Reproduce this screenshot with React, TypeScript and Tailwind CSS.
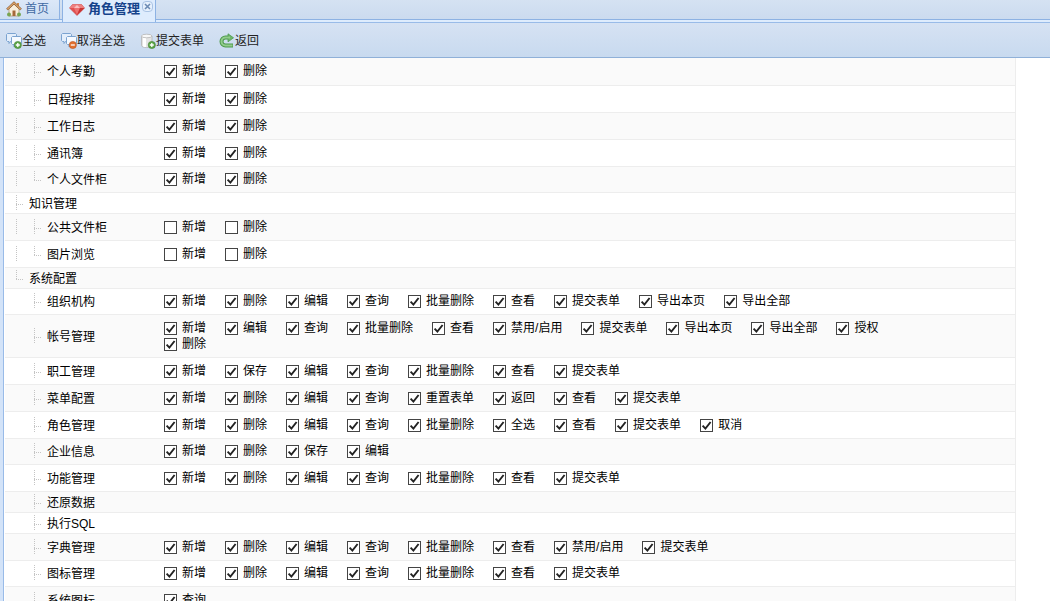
import { useState } from "react";
import clsx from "clsx";

type Guide = "none" | "bar" | "tee" | "end";

interface MenuRow {
  name: string;
  guides: Guide[];
  actions?: string[];
  unchecked?: boolean;
}

const ROWS: MenuRow[] = [
  { name: "个人考勤", guides: ["bar", "tee"], actions: ["新增", "删除"] },
  { name: "日程按排", guides: ["bar", "tee"], actions: ["新增", "删除"] },
  { name: "工作日志", guides: ["bar", "tee"], actions: ["新增", "删除"] },
  { name: "通讯簿", guides: ["bar", "tee"], actions: ["新增", "删除"] },
  { name: "个人文件柜", guides: ["bar", "end"], actions: ["新增", "删除"] },
  { name: "知识管理", guides: ["tee"] },
  { name: "公共文件柜", guides: ["bar", "tee"], actions: ["新增", "删除"], unchecked: true },
  { name: "图片浏览", guides: ["bar", "end"], actions: ["新增", "删除"], unchecked: true },
  { name: "系统配置", guides: ["end"] },
  {
    name: "组织机构",
    guides: ["none", "tee"],
    actions: ["新增", "删除", "编辑", "查询", "批量删除", "查看", "提交表单", "导出本页", "导出全部"],
  },
  {
    name: "帐号管理",
    guides: ["none", "tee"],
    actions: ["新增", "编辑", "查询", "批量删除", "查看", "禁用/启用", "提交表单", "导出本页", "导出全部", "授权", "删除"],
  },
  { name: "职工管理", guides: ["none", "tee"], actions: ["新增", "保存", "编辑", "查询", "批量删除", "查看", "提交表单"] },
  { name: "菜单配置", guides: ["none", "tee"], actions: ["新增", "删除", "编辑", "查询", "重置表单", "返回", "查看", "提交表单"] },
  {
    name: "角色管理",
    guides: ["none", "tee"],
    actions: ["新增", "删除", "编辑", "查询", "批量删除", "全选", "查看", "提交表单", "取消"],
  },
  { name: "企业信息", guides: ["none", "tee"], actions: ["新增", "删除", "保存", "编辑"] },
  { name: "功能管理", guides: ["none", "tee"], actions: ["新增", "删除", "编辑", "查询", "批量删除", "查看", "提交表单"] },
  { name: "还原数据", guides: ["none", "tee"] },
  { name: "执行SQL", guides: ["none", "tee"] },
  { name: "字典管理", guides: ["none", "tee"], actions: ["新增", "删除", "编辑", "查询", "批量删除", "查看", "禁用/启用", "提交表单"] },
  { name: "图标管理", guides: ["none", "tee"], actions: ["新增", "删除", "编辑", "查询", "批量删除", "查看", "提交表单"] },
  { name: "系统图标", guides: ["none", "tee"], actions: ["查询"] },
];

function HomeIcon() {
  return (
    <svg className="size-4 shrink-0" viewBox="0 0 16 16">
      <path d="M3 8l5-5 5 5v7H3z" fill="#f8eedb" stroke="#a98a63" strokeWidth=".7" />
      <path d="M11 2h2v4l-2-2z" fill="#c98a4e" />
      <path d="M1 8.5L8 1.8l7 6.7" fill="none" stroke="#8a5a33" strokeWidth="2.4" />
      <path d="M1.3 8.2L8 1.8l6.7 6.4" fill="none" stroke="#dba56c" strokeWidth="1.2" />
      <path d="M6.5 9.5h3V15h-3z" fill="#a5683a" />
      <circle cx="3" cy="13.5" r="2" fill="#78a552" />
      <circle cx="13" cy="13.5" r="2" fill="#78a552" />
    </svg>
  );
}

function RubyIcon() {
  return (
    <svg className="size-4 shrink-0" viewBox="0 0 16 16">
      <path d="M3.5 3.5h9L15.5 7 8 14.5.5 7z" fill="#e25050" stroke="#c54646" strokeWidth=".6" />
      <path d="M3.5 3.5h9L15.5 7H.5z" fill="#ee8080" />
      <path d="M5 7l3-3 3 3z" fill="#f9c0c0" />
      <path d="M5 7h6l-3 6.5z" fill="#ee7272" />
      <path d="M11 7h4.5L8 14z" fill="#c93434" />
    </svg>
  );
}

function CommentsIcon({ remove }: { remove?: boolean }) {
  return (
    <svg className="size-4 shrink-0" viewBox="0 0 16 16">
      <path d="M1.5.5h8l1 1v6l-1 1h-5L3 10.500V8.500H1.500l-1-1v-6z" fill="#e3eefb" stroke="#7ba3d0" />
      <path d="M6.500 3.500h8l1 1v6l-1 1H10l-2 2.500v-2.500H6.500l-1-1v-6z" fill="#f6faff" stroke="#7ba3d0" />
      <circle cx="11.8" cy="12" r="3.6" fill={remove ? "#e2702f" : "#5da548"} stroke={remove ? "#b9501c" : "#3f8230"} strokeWidth=".6" />
      <path d={remove ? "M9.800 12h4" : "M9.800 12h4M11.800 10v4"} stroke="#fff" strokeWidth="1.3" />
    </svg>
  );
}

function DatabaseAddIcon() {
  return (
    <svg className="size-4 shrink-0" viewBox="0 0 16 16">
      <path d="M1.5 3v9.5c0 1.2 2.2 2 5 2s5.500-.8 5.500-2V3z" fill="#e4e4e4" stroke="#b5b5b5" strokeWidth=".8" />
      <path d="M3 4v9.5c1 .5 2 .6 3 .6V4.5z" fill="#fff" />
      <ellipse cx="6.7" cy="3" rx="5.2" ry="1.8" fill="#f8f8f8" stroke="#b5b5b5" strokeWidth=".8" />
      <circle cx="11.8" cy="12" r="3.6" fill="#5da548" stroke="#3f8230" strokeWidth=".6" />
      <path d="M9.8 12h4M11.8 10v4" stroke="#fff" strokeWidth="1.3" />
    </svg>
  );
}

function BackIcon() {
  return (
    <svg className="size-4 shrink-0" viewBox="0 0 16 16">
      <path d="M14 12.5H6.5a4 4 0 010-8H10" fill="none" stroke="#4d9a4d" strokeWidth="4" />
      <path d="M9 .8L14.5 4.8 9 8.8z" fill="#6fb56b" stroke="#4d9a4d" strokeWidth=".8" />
      <path d="M13.5 12.5h-7a4 4 0 010-8H11" fill="none" stroke="#92cc8c" strokeWidth="2" />
    </svg>
  );
}

function TreeGuide({ kind }: { kind: Guide }) {
  const d = {
    none: "",
    bar: "M1.5 0v16",
    tee: "M1.5 0v16M1 9.5h7",
    end: "M1.5 0v10M1 9.5h7",
  }[kind];

  return (
    <svg className="h-4 w-[18px] shrink-0" viewBox="0 0 18 16">
      <path d={d} fill="none" stroke="#c4c4c4" strokeDasharray="1 1" />
    </svg>
  );
}

function ActionBox({ label, checked, onToggle }: { label: string; checked: boolean; onToggle: () => void }) {
  return (
    <label className="mr-[19px] flex h-4 items-start gap-[5px] leading-4 whitespace-nowrap">
      <span className="relative mt-0.5 size-[13px] shrink-0">
        <input
          type="checkbox"
          checked={checked}
          onChange={onToggle}
          className="block size-[13px] appearance-none border border-[#444] bg-white"
        />
        {checked && (
          <svg className="pointer-events-none absolute inset-0 size-[13px]" viewBox="0 0 13 13">
            <path d="M2.6 6.6l2.8 3L10.600 3" fill="none" stroke="#222" strokeWidth="1.9" />
          </svg>
        )}
      </span>
      {label}
    </label>
  );
}

const initialChecked = () =>
  ROWS.map(row => (row.actions ?? []).map(() => !row.unchecked));

export default function App() {
  const [checked, setChecked] = useState<boolean[][]>(initialChecked);

  const setAll = (value: boolean) => setChecked(prev => prev.map(row => row.map(() => value)));
  const toggle = (r: number, c: number) =>
    setChecked(prev => prev.map((row, i) => (i === r ? row.map((v, j) => (j === c ? !v : v)) : row)));

  const tools = [
    { label: "全选", icon: <CommentsIcon />, onClick: () => setAll(true) },
    { label: "取消全选", icon: <CommentsIcon remove />, onClick: () => setAll(false) },
    { label: "提交表单", icon: <DatabaseAddIcon /> },
    { label: "返回", icon: <BackIcon /> },
  ];

  return (
    <div className="flex h-screen flex-col overflow-hidden bg-white font-['Liberation_Sans','Noto_Sans_CJK_SC',sans-serif] text-xs text-black">
      {/* Tabs */}
      <nav className="flex h-[23px] shrink-0 items-start border-b border-[#99bbe8] bg-[#deecfd]">
        <div className="flex h-5 w-full gap-0.5 border-b border-[#8db2e3] bg-linear-to-b from-[#d5e2f2] to-[#cbdbef]">
          <a href="#home" className="flex h-5 items-start gap-[3px] border-r border-b border-[#8db2e3] bg-linear-to-b from-[#dce8f8] to-[#cddef3] pt-px pr-2.5 pl-1.5 leading-4 text-[#416aa3]">
            <HomeIcon />
            首页
          </a>
          <div className="flex h-[22px] items-start border-x border-[#8db2e3] bg-[#deecfd] pt-px pr-0.5 pl-1.5">
            <a href="#roles" className="flex gap-[3px] text-[13px] leading-4 font-bold text-[#15428b]">
              <RubyIcon />
              角色管理
            </a>
            <button aria-label="关闭" className="ml-0.5 flex size-[11px] items-center justify-center rounded-sm border border-[#a9c3e4] bg-[#e6f0fc]">
              <svg className="size-[7px]" viewBox="0 0 7 7">
                <path d="M1 1l5 5M6 1L1 6" stroke="#6c8bb4" strokeWidth="1.6" />
              </svg>
            </button>
          </div>
        </div>
      </nav>

      {/* Toolbar */}
      <div className="flex h-[35px] shrink-0 items-center gap-[15px] border-b border-[#8fb0d8] bg-linear-to-b from-[#d6e2f3] to-[#c8daef] pt-0.5 pl-1.5">
        {tools.map(tool => (
          <button key={tool.label} onClick={tool.onClick} className="flex h-5 items-center text-[#222]">
            {tool.icon}
            {tool.label}
          </button>
        ))}
      </div>

      {/* Permission table */}
      <main className="flex-1 overflow-hidden border-l-[3px] border-[#d3e3f8]">
        <div className="h-full border-l border-[#99bbe8] pr-[34px] pl-px">
          <table className="w-full border-r border-[#ededed]">
            <tbody>
              {ROWS.map((row, r) => (
                <tr
                  key={row.name}
                  className={clsx(
                    "border-b border-[#ededed] odd:bg-[#fafafa]",
                    row.actions ? "h-[27px] [&:nth-child(5n)]:h-[26px]" : "h-[21px]",
                  )}
                >
                  <th scope="row" className="w-[159px] p-0 pl-2.5 font-normal">
                    <div className="flex h-4 items-center">
                      {row.guides.map((kind, i) => (
                        <TreeGuide key={i} kind={kind} />
                      ))}
                      <span className="-ml-1 pt-0.5 leading-4">{row.name}</span>
                    </div>
                  </th>
                  <td className="p-0 pr-24">
                    {row.actions && (
                      <div className={clsx("flex flex-wrap", row.actions.length > 10 && "py-[5px]")}>
                        {row.actions.map((label, c) => (
                          <ActionBox key={label} label={label} checked={checked[r][c]} onToggle={() => toggle(r, c)} />
                        ))}
                      </div>
                    )}
                  </td>
                </tr>
              ))}
            </tbody>
          </table>
        </div>
      </main>
    </div>
  );
}
